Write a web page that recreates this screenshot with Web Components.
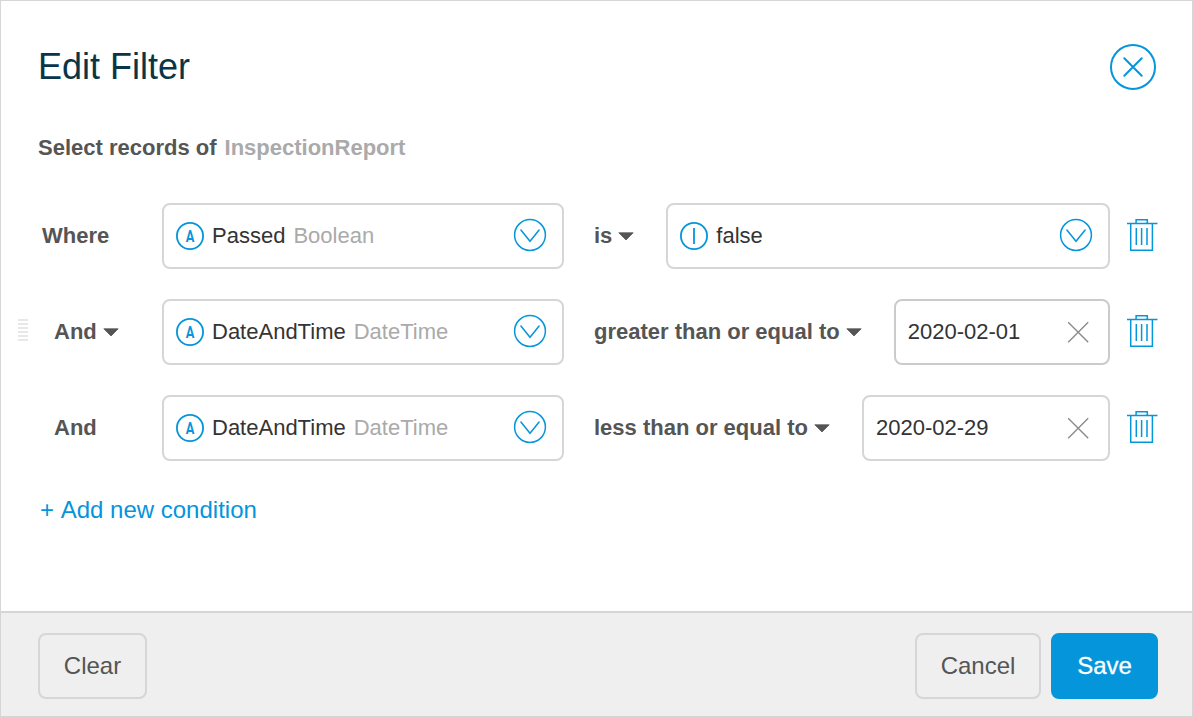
<!DOCTYPE html>
<html lang="en">
<head>
<meta charset="utf-8">
<title>Edit Filter</title>
<style>
  html, body { margin: 0; height: 100%; background: #fff; overflow: hidden; }
  body { font-family: "Liberation Sans", Arial, sans-serif; font-size: 22px; color: #555; }
</style>
</head>
<body>
<filter-dialog>
  <span slot="title">Edit Filter</span>
  <span slot="label">Select records of</span>
  <span slot="entity">InspectionReport</span>
  <condition-row indent="41">
    <span slot="join">Where</span>
    <select-box slot="field" icon="attribute" type="Boolean">Passed</select-box>
    <span slot="operator">is</span>
    <select-box slot="value" icon="value">false</select-box>
  </condition-row>
  <condition-row indent="53" draggable-row>
    <drop-label slot="join">And</drop-label>
    <select-box slot="field" icon="attribute" type="DateTime">DateAndTime</select-box>
    <span slot="operator">greater than or equal to</span>
    <date-box slot="value" active>2020-02-01</date-box>
  </condition-row>
  <condition-row indent="53">
    <span slot="join">And</span>
    <select-box slot="field" icon="attribute" type="DateTime">DateAndTime</select-box>
    <span slot="operator">less than or equal to</span>
    <date-box slot="value">2020-02-29</date-box>
  </condition-row>
  <span slot="add">+ Add new condition</span>
  <push-button slot="left" style="width:109px">Clear</push-button>
  <push-button slot="right" style="width:126px">Cancel</push-button>
  <push-button slot="right" primary style="width:107px">Save</push-button>
</filter-dialog>

<script>
const BLUE = '#0595db';

class Base extends HTMLElement {
  constructor() { super(); this.attachShadow({ mode: 'open' }); }
  connectedCallback() {
    this.shadowRoot.innerHTML = `<style>*{box-sizing:border-box}svg{display:block;flex:none}${this.css()}</style>${this.html()}`;
  }
}

// Word followed by a small downward caret
customElements.define('drop-label', class extends Base {
  css() { return `:host{display:flex;align-items:center;gap:6px;white-space:nowrap}`; }
  html() {
    return `<slot></slot><svg width="16" height="9" viewBox="0 0 16 9"><path d="M.8.8H15.2L8 8Z" fill="#555" stroke="#555" stroke-width=".8" stroke-linejoin="round"/></svg>`;
  }
});

customElements.define('type-icon', class extends Base {
  css() { return `:host{display:block;width:28px;height:28px;flex:none}text{font:700 16.5px Roboto,sans-serif}`; }
  html() {
    const mark = this.getAttribute('kind') === 'attribute'
      ? `<text transform="translate(14 20.1) scale(.78 1)" text-anchor="middle" fill="${BLUE}">A</text>`
      : `<path d="M14 6V22" stroke="${BLUE}" stroke-width="1.8"/>`;
    return `<svg width="28" height="28" viewBox="0 0 28 28" fill="none"><circle cx="14" cy="14" r="13.1" stroke="${BLUE}" stroke-width="1.8"/>${mark}</svg>`;
  }
});

customElements.define('select-box', class extends Base {
  css() {
    return `:host{box-sizing:border-box;display:flex;align-items:center;height:66px;border:2px solid #d6d6d6;border-radius:8px;background:#fff;padding:0 15px 0 12px;color:#333;font-weight:400;white-space:nowrap}
      .name{margin-left:8px}.type{margin-left:8px;color:#aaa;flex:1}.chev{margin-top:-2px}`;
  }
  html() {
    return `<type-icon kind="${this.getAttribute('icon')}"></type-icon><span class="name"><slot></slot></span><span class="type">${this.getAttribute('type') || ''}</span>
      <svg class="chev" width="34" height="34" viewBox="0 0 34 34" fill="none" stroke="${BLUE}" stroke-width="1.5"><circle cx="17" cy="17" r="15.4"/><path d="M7.9 12 17 23.3 26.1 12" stroke-linecap="round"/></svg>`;
  }
});

customElements.define('date-box', class extends Base {
  css() {
    return `:host{box-sizing:border-box;display:flex;align-items:center;justify-content:space-between;height:66px;border:2px solid #d6d6d6;border-radius:8px;background:#fff;padding:0 18px 0 12px;color:#333;font-weight:400;white-space:nowrap}
      :host([active]){border-color:#cbcbcb}`;
  }
  html() {
    return `<slot></slot><svg width="23" height="23" viewBox="0 0 23 23" stroke="#888" stroke-width="1.3"><path d="M1.2 1.2 21.2 21.2M21.2 1.2 1.2 21.2"/></svg>`;
  }
});

customElements.define('condition-row', class extends Base {
  css() {
    return `:host{display:flex;align-items:center;height:66px;font-weight:700;white-space:nowrap}
      .lead{width:161px;flex:none;display:flex;align-items:center}
      .grip{width:${this.getAttribute('indent')}px;padding:0 0 4px 17px;flex:none}
      slot[name=field]{display:block;width:402px;flex:none;margin-right:30px}
      slot[name=value]{display:block;flex:1;margin-left:32px}
      .trash{margin:-2px 0 0 17px}`;
  }
  html() {
    const bars = this.hasAttribute('draggable-row')
      ? `<svg width="10" height="22" viewBox="0 0 10 22"><path d="M0 1H10M0 5H10M0 9H10M0 13H10M0 17H10M0 21H10" stroke="#e8e8e8" stroke-width="2"/></svg>` : '';
    return `<div class="lead"><div class="grip">${bars}</div><slot name="join"></slot></div>
      <slot name="field"></slot>
      <drop-label><slot name="operator"></slot></drop-label>
      <slot name="value"></slot>
      <svg class="trash" width="31" height="32" viewBox="0 0 31 32" fill="none" stroke="${BLUE}" stroke-width="1.5"><path d="M0 4.6H30.5M3.7 4.6V31.3H25.4V4.6M9.1 4.6V.7H20.3V4.6M9.3 9V26M14.6 9V26M20 9V26"/></svg>`;
  }
});

customElements.define('push-button', class extends Base {
  css() {
    return `:host{box-sizing:border-box;display:flex;align-items:center;justify-content:center;height:66px;border:2px solid #d6d6d6;border-radius:8px;font-size:24px;color:#555}
      :host([primary]){background:${BLUE};border-color:${BLUE};color:#fff;-webkit-text-stroke:.3px #fff}`;
  }
  html() { return `<slot></slot>`; }
});

customElements.define('filter-dialog', class extends Base {
  css() {
    return `:host{box-sizing:border-box;display:flex;flex-direction:column;width:1193px;height:717px;border:1px solid #d6d6d6;background:#fff}
      header{display:flex;justify-content:space-between;align-items:center;padding:42px 36px 0 37px;height:90px}
      h1{margin:0;font-size:36px;font-weight:400;line-height:42px;color:#0a3549}
      .sub{display:flex;gap:8px;margin:44px 0 0 37px;height:26px;line-height:26px;font-weight:700}
      .entity{color:#aaa}
      .rows{display:flex;flex-direction:column;gap:30px;margin:42px 34px 0 0}
      .add{margin:33px 0 0 39px;line-height:32px;font-size:24px;font-kerning:none;color:${BLUE}}
      footer{margin-top:auto;height:105px;border-top:2px solid #d6d6d6;background:#efefef;display:flex;align-items:flex-start;gap:10px;padding:20px 34px 0 37px}
      .space{flex:1}`;
  }
  html() {
    return `<header><h1><slot name="title"></slot></h1>
        <svg width="46" height="46" viewBox="0 0 46 46" fill="none" stroke="${BLUE}" stroke-width="2"><circle cx="23" cy="23" r="22"/><path d="M14.3 14.3 31.7 31.7M31.7 14.3 14.3 31.7" stroke-linecap="round"/></svg></header>
      <div class="sub"><slot name="label"></slot><span class="entity"><slot name="entity"></slot></span></div>
      <div class="rows"><slot></slot></div>
      <div class="add"><slot name="add"></slot></div>
      <footer><slot name="left"></slot><div class="space"></div><slot name="right"></slot></footer>`;
  }
});
</script>
</body>
</html>
